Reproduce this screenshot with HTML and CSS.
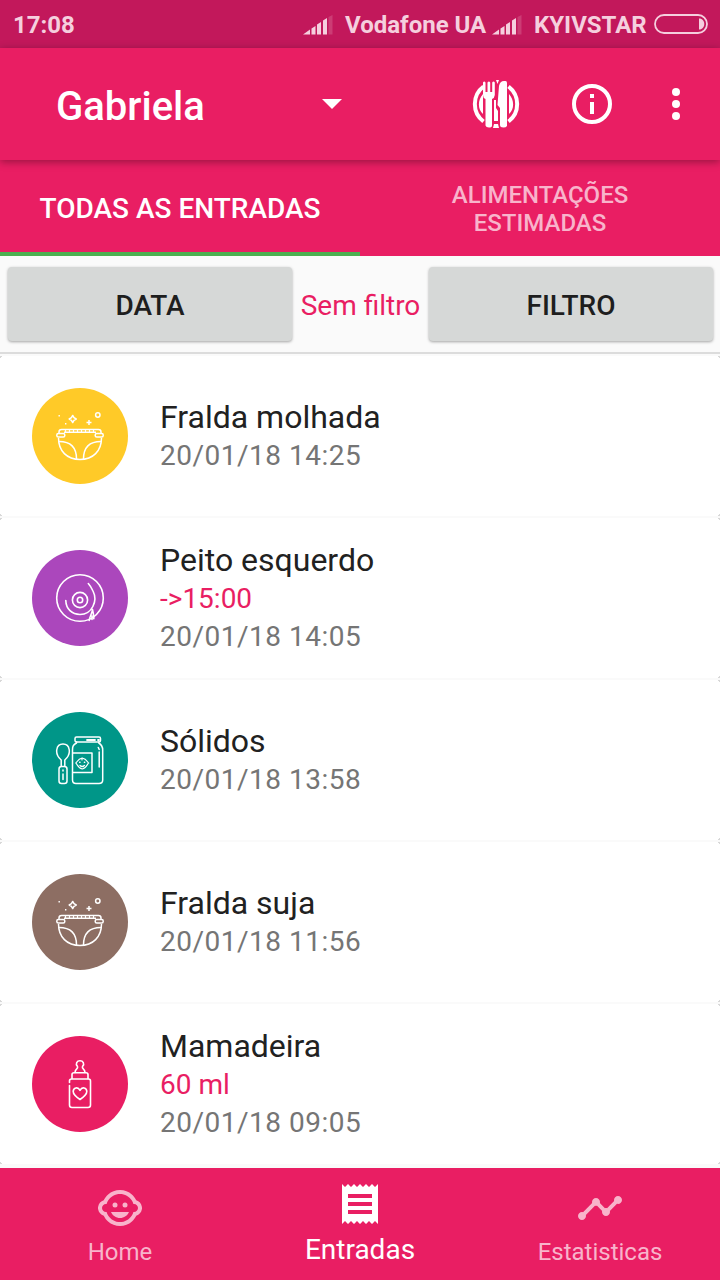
FILE: index.html
```html
<!DOCTYPE html>
<html lang="pt">
<head>
<meta charset="utf-8">
<title>Entradas</title>
<link rel="stylesheet" href="styles.css">
</head>
<body>
<svg class="defs" width="0" height="0">
  <symbol id="signal" viewBox="0 0 32 22">
    <path d="M1 20.500L8 15.500V20.500ZM9.500 14.500L13.500 12V20.500H9.500ZM15 10.500L19 8V20.500H15ZM21 6.500L25 4V20.500H21Z" fill="currentColor"/>
    <path d="M26.500 3L30.500 1V20.500H26.500Z" fill="currentColor" opacity=".2"/>
  </symbol>
  <symbol id="diaper" viewBox="0 0 96 96">
    <g fill="none" stroke="#fff" stroke-width="1.500" stroke-linejoin="round">
      <path d="M27 45V44Q27 41.500 29.500 41.500H66.500Q69 41.500 69 44V45M32 44.300H64" />
      <path d="M33.500 42V45M37.500 42V45M41.500 42V45M45.500 42V45M49.500 42V45M53.500 42V45M57.500 42V45M61.500 42V45" stroke-width="1.200"/>
      <rect x="24.800" y="45.500" width="8" height="3.600" rx="1.500"/>
      <rect x="63.200" y="45.500" width="8" height="3.600" rx="1.500"/>
      <path d="M26.500 50C26.500 63 35 71.500 48 71.500S69.500 63 69.500 50"/>
      <path d="M27 53.500C37 53.500 44.500 58 44.500 71M69 53.500C59 53.500 51.500 58 51.500 71"/>
      <path d="M40.700 27.500L42 29.700L44.200 31L42 32.300L40.700 34.500L39.400 32.300L37.200 31L39.400 29.700Z"/>
      <path d="M57 32V37M54.500 34.500H59.500"/>
      <circle cx="65.800" cy="27" r="2.200"/>
    </g>
    <path d="M26.500 27h1.400v1.400h-1.400zM33 35h1.400v1.400H33z" fill="#fff"/>
  </symbol>
</svg>
<div class="screen">
  <div class="status">
    <span class="time">17:08</span>
    <svg class="signal" width="32" height="22"><use href="#signal"/></svg>
    <span class="carrier">Vodafone UA</span>
    <svg class="signal second" width="32" height="22"><use href="#signal"/></svg>
    <span class="carrier last">KYIVSTAR</span>
    <svg class="battery" width="54" height="20" viewBox="0 0 54 20"><rect x="1" y="1" width="52" height="18" rx="9" fill="none" stroke="currentColor" stroke-width="1.800"/><path d="M45 4.500C52 4.500 52 15.500 45 15.500Z" fill="currentColor"/></svg>
  </div>

  <header class="toolbar">
    <h1 class="name">Gabriela</h1>
    <svg class="caret" width="20" height="10" viewBox="0 0 20 10"><path d="M0 0H20L10 10Z" fill="#fff"/></svg>
    <svg class="food" width="48" height="48" viewBox="0 0 48 48">
      <g fill="none" stroke="#fff">
        <path d="M11.500 6.500A22 22 0 0 0 11.500 41.500M36.500 6.500A22 22 0 0 1 36.500 41.500" stroke-width="4"/>
      </g>
      <g fill="#fff">
        <path d="M11 14V34C5.500 29 5.500 20 11 14ZM37 14V34C42.500 29 42.500 20 37 14Z"/>
        <path d="M11 2.500Q12.200 .500 13.500 2.500V12H15.500V2.500Q17 .500 18.200 2.500V12H20.200V2.500Q21.500 .500 22.800 2.500V15Q22.500 18 20 19V45.500Q20 47.500 17 47.500T13.500 45.500V19Q11 18 11 15Z"/>
        <path d="M35 46Q34 47.500 31.500 47.500Q28 47.500 28 45V28L25.500 25L27 6Q28 1 32 1H33.500Q35 1 35 3Z"/>
        <path d="M24 0H27L25.500 4ZM22 20H24V28L26 31V41H22ZM22 44H26L27 48H21Z"/>
      </g>
    </svg>
    <svg class="info" width="40" height="40" viewBox="0 0 40 40"><circle cx="20" cy="20" r="18" fill="none" stroke="#fff" stroke-width="4"/><path d="M18 10H22V14H18ZM18 18H22V30H18Z" fill="#fff"/></svg>
    <svg class="more" width="8" height="32" viewBox="0 0 8 32"><g fill="#fff"><circle cx="4" cy="4" r="4"/><circle cx="4" cy="16" r="4"/><circle cx="4" cy="28" r="4"/></g></svg>
  </header>

  <nav class="tabs">
    <a class="tab active">TODAS AS ENTRADAS</a>
    <a class="tab">ALIMENTAÇÕES<br>ESTIMADAS</a>
  </nav>

  <div class="filters">
    <button class="btn">DATA</button>
    <span class="current">Sem filtro</span>
    <button class="btn">FILTRO</button>
  </div>

  <main class="list">
    <article class="row">
      <svg class="badge yellow" viewBox="0 0 96 96"><use href="#diaper"/></svg>
      <div class="text"><h2>Fralda molhada</h2><p>20/01/18 14:25</p></div>
    </article>
    <article class="row">
      <svg class="badge purple" viewBox="0 0 96 96"><g fill="none" stroke="#fff" stroke-width="1.600" stroke-linecap="round"><circle cx="48" cy="48" r="23.300"/><circle cx="48" cy="50" r="7.600"/><circle cx="48" cy="50" r="2.700"/><path d="M33.800 50.500C34 59 40 64.500 48 64.500C60 64.500 66 51 61 41Q59 36.500 56.300 33.500M60.500 59.500C60 64 57.500 66.500 57.200 70.500M60.500 59.500C61.500 64 62 66 61.800 68.800M60 66V69.500"/></g></svg>
      <div class="text"><h2>Peito esquerdo</h2><p class="detail">-&gt;15:00</p><p>20/01/18 14:05</p></div>
    </article>
    <article class="row">
      <svg class="badge teal" viewBox="0 0 96 96"><g fill="none" stroke="#fff" stroke-width="1.500" stroke-linejoin="round" stroke-linecap="round">
        <rect x="43" y="25" width="25.500" height="5" rx="1.500"/><path d="M55 28H63M66 28H67" stroke-width="1.800"/>
        <path d="M44.500 30V31C41 33 40.500 34.500 40.500 38V68Q40.500 71.500 44 71.500H67Q70.700 71.500 70.700 68V38C70.700 34.500 70 33 66.800 31V30"/>
        <path d="M41 41H60V60.500H41M67.200 40V55M66.300 35.500L67.200 37.500"/>
        <path d="M43.700 51C45 50.500 45.500 47 50.200 46C55 47 55.400 50.500 56.700 51C55.400 51.500 55 56 50.200 57C45.500 56 45 51.500 43.700 51ZM48 53.500Q50.200 55.500 52.400 53.500M50 46V48" stroke-width="1.200"/>
        <path d="M47.700 50.200H48M52.400 50.200H52.700"/>
        <path d="M29.200 54V48C22 42 24 32 31 32C38 32 40 42 32.800 48V54"/>
        <rect x="27" y="54.500" width="8" height="17" rx="2.500"/><path d="M31 58V59M31 62V67.500"/>
      </g></svg>
      <div class="text"><h2>Sólidos</h2><p>20/01/18 13:58</p></div>
    </article>
    <article class="row">
      <svg class="badge brown" viewBox="0 0 96 96"><use href="#diaper"/></svg>
      <div class="text"><h2>Fralda suja</h2><p>20/01/18 11:56</p></div>
    </article>
    <article class="row">
      <svg class="badge pink" viewBox="0 0 96 96"><g fill="none" stroke="#fff" stroke-width="1.600" stroke-linejoin="round" stroke-linecap="round">
        <path d="M37.500 46.500V45Q37.500 43 39.500 43H56.500Q58.500 43 58.500 45V69Q58.500 71.500 56 71.500H40Q37.500 71.500 37.500 69V49.500"/>
        <path d="M40 42.500V38.500Q40 36.800 42 36.800H54Q56 36.800 56 38.500V42.500"/>
        <path d="M43 36.500C43 32.500 46.500 33 45.500 30.500C43 27.500 45 24.800 48 24.800S53 27.500 50.500 30.500C49.500 33 53 32.500 53 36.500"/>
        <path d="M48 63.500C43.500 60.500 41.200 58 41.200 55.500C41.200 51.500 46 50.500 48 54.300C50 50.500 54.800 51.500 54.800 55.500C54.800 58 52.500 60.500 48 63.500Z"/>
      </g></svg>
      <div class="text"><h2>Mamadeira</h2><p class="detail">60 ml</p><p>20/01/18 09:05</p></div>
    </article>
  </main>

  <nav class="bottom">
    <a class="item">
      <svg width="48" height="48" viewBox="0 0 24 24"><path d="M22.940 12.660c.040-.21.060-.43.060-.66s-.020-.45-.060-.66c-.25-1.510-1.360-2.740-2.810-3.170-.53-1.120-1.280-2.100-2.190-2.910C16.360 3.850 14.280 3 12 3s-4.360.850-5.940 2.260c-.92.810-1.670 1.800-2.190 2.910-1.450.43-2.560 1.650-2.810 3.170-.040.210-.060.430-.060.660s.020.450.060.660c.25 1.510 1.360 2.740 2.810 3.170.52 1.110 1.270 2.090 2.170 2.890C7.620 20.140 9.710 21 12 21s4.380-.860 5.970-2.280c.9-.8 1.650-1.790 2.170-2.890 1.440-.43 2.550-1.650 2.800-3.170zM19 14c-.1 0-.19-.020-.29-.030-.2.670-.49 1.290-.86 1.860C16.600 17.740 14.450 19 12 19s-4.600-1.260-5.850-3.170c-.37-.57-.66-1.190-.86-1.860-.1.010-.19.030-.29.030-1.100 0-2-.9-2-2s.9-2 2-2c.1 0 .19.020.29.030.2-.67.490-1.290.860-1.860C7.400 6.260 9.550 5 12 5s4.600 1.260 5.850 3.170c.37.570.66 1.190.86 1.860.1-.010.190-.030.290-.030 1.100 0 2 .9 2 2s-.9 2-2 2z" fill="currentColor"/><g fill="currentColor"><circle cx="9.500" cy="10.500" r="1.250"/><circle cx="14.500" cy="10.500" r="1.250"/><path d="M7.500 14C8.260 15.770 9.980 17 12 17s3.740-1.230 4.500-3z"/></g></svg>
      <span>Home</span>
    </a>
    <a class="item selected">
      <svg width="48" height="48" viewBox="0 0 24 24"><path d="M18 17H6v-2h12v2zm0-4H6v-2h12v2zm0-4H6V7h12v2zM3 22l1.500-1.500L6 22l1.500-1.500L9 22l1.500-1.500L12 22l1.500-1.500L15 22l1.500-1.500L18 22l1.500-1.500L21 22V2l-1.500 1.500L18 2l-1.500 1.500L15 2l-1.500 1.500L12 2l-1.500 1.500L9 2 7.500 3.500 6 2 4.500 3.500 3 2v20z" fill="currentColor"/></svg>
      <span>Entradas</span>
    </a>
    <a class="item">
      <svg width="48" height="48" viewBox="0 0 24 24"><path d="M23 8c0 1.100-.9 2-2 2-.18 0-.35-.020-.51-.070l-3.560 3.550c.050.160.070.340.070.520 0 1.100-.9 2-2 2s-2-.9-2-2c0-.18.020-.36.070-.52l-2.550-2.550c-.16.050-.34.070-.52.070s-.36-.020-.52-.070l-4.550 4.560c.050.160.070.330.070.510 0 1.100-.9 2-2 2s-2-.9-2-2 .9-2 2-2c.18 0 .35.020.51.070l4.560-4.550C8.020 9.360 8 9.180 8 9c0-1.100.9-2 2-2s2 .9 2 2c0 .18-.020.360-.070.520l2.550 2.550c.16-.050.340-.070.520-.070s.36.020.52.070l3.550-3.560C19.020 8.350 19 8.180 19 8c0-1.100.9-2 2-2s2 .9 2 2z" fill="currentColor"/></svg>
      <span>Estatisticas</span>
    </a>
  </nav>
</div>
</body>
</html>
```

FILE: styles.css
```css
* { box-sizing: border-box; }
body { margin: 0; font-family: Roboto, "Noto Sans", sans-serif; background: #fafafa; }
h1, h2, p { margin: 0; font-weight: 400; }
svg { display: block; flex: none; }
.defs { position: absolute; }
.screen { width: 720px; height: 1280px; overflow: hidden; display: flex; flex-direction: column; }

.status { height: 48px; background: #c2185b; color: #f5cfde; display: flex; align-items: center; padding: 2px 12px 0 13px; font-size: 24px; font-weight: 700; white-space: nowrap; }
.time { width: 289px; }
.carrier { width: 134px; margin-left: 11px; }
.signal.second { margin-left: 12px; }
.carrier.last { width: 109px; }
.battery { margin-left: 11px; margin-top: -2px; }

.toolbar { height: 112px; background: #e91e63; display: flex; align-items: center; padding: 0 40px 0 56px; box-shadow: 0 2px 8px rgba(0,0,0,.35); z-index: 1; }
.name { width: 266px; font-size: 40px; font-weight: 500; color: #fff; padding-top: 4px; }
.food { margin-left: 130px; }
.info { margin-left: 52px; }
.more { margin-left: 60px; }

.tabs { height: 96px; background: #e91e63; display: flex; }
.tab { flex: 1; display: flex; align-items: center; justify-content: center; text-align: center; font-size: 24px; line-height: 28px; font-weight: 500; color: #f8b4cb; padding-top: 2px; }
.tab.active { font-size: 28px; color: #fff; border-bottom: 4px solid #4caf50; padding-top: 6px; }

.filters { height: 98px; padding: 11px 7px 0 8px; display: flex; align-items: flex-start; border-bottom: 2px solid #dcdcdc; background: #fafafa; }
.btn { flex: 1; height: 74px; border: 0; border-radius: 4px; background: #d6d8d7; box-shadow: 0 1px 3px rgba(0,0,0,.35); color: #1e1e1e; font: 500 28px Roboto, sans-serif; padding: 3px 0 0; }
.current { width: 137px; text-align: center; font-size: 28px; line-height: 74px; padding-top: 2px; color: #e91e63; white-space: nowrap; }

.list { flex: 1; min-height: 0; padding-top: 2px; display: flex; flex-direction: column; gap: 2px; }
.row { height: 160px; flex: none; background: #fff; display: flex; align-items: center; gap: 32px; padding-left: 32px; }
.badge { width: 96px; height: 96px; border-radius: 50%; }
.yellow { background: #ffca28; }
.purple { background: #ab47bc; }
.teal { background: #009688; }
.brown { background: #8d6e63; }
.pink { background: #e91e63; }
.row { background: radial-gradient(circle at 0 0, #d8d8d8 2px, transparent 2px), radial-gradient(circle at 100% 0, #d8d8d8 2px, transparent 2px), radial-gradient(circle at 0 100%, #d8d8d8 2px, transparent 2px), radial-gradient(circle at 100% 100%, #d8d8d8 2px, transparent 2px), #fff; }
.text h2 { font-size: 32px; line-height: 40px; color: #212121; }
.text p { font-size: 28px; line-height: 38px; color: #757575; letter-spacing: .5px; }
.text .detail { color: #e91e63; letter-spacing: 0; }

.bottom { height: 112px; background: #e91e63; display: flex; color: #f8b4cb; }
.item { flex: 1; display: flex; flex-direction: column; align-items: center; padding-top: 16px; font-size: 24px; line-height: 28px; }
.item span { margin-top: 6px; }
.item.selected { color: #fff; padding-top: 12px; font-size: 28px; }
.item.selected span { margin-top: 8px; }
```
